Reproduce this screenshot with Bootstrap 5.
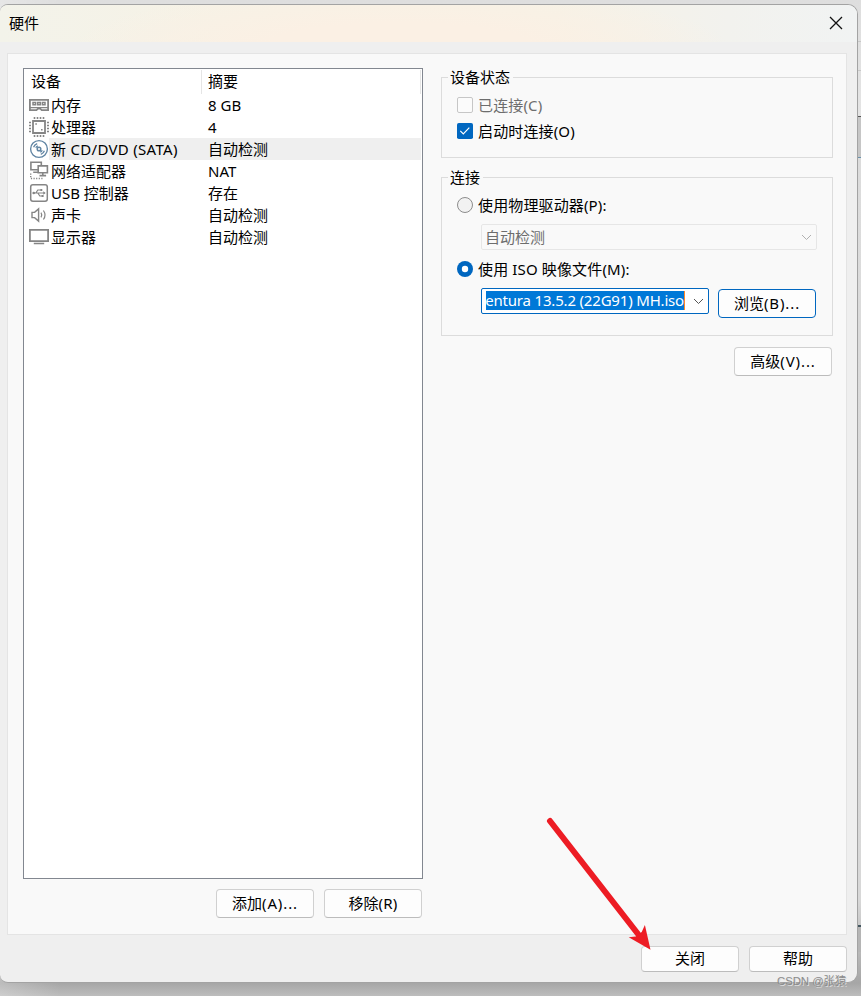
<!DOCTYPE html>
<html lang="zh-CN">
<head>
<meta charset="utf-8">
<title>硬件</title>
<link rel="stylesheet" href="https://cdn.jsdelivr.net/npm/bootstrap@5.3.0/dist/css/bootstrap.min.css">
<style>
body{width:861px;height:996px;overflow:hidden;font:400 15px/22px "Noto Sans","Noto Sans CJK SC",sans-serif;color:#000;background:linear-gradient(90deg,rgba(255,255,255,.25),transparent 60px),linear-gradient(#dedede 0,#e4e4e4 115px,#dcdcdc 160px,#d8d8d8 900px,#a6a6a6 983px,#bdbdbd 996px)}
.backdrop{position:absolute;left:857px;top:0;width:4px;height:996px;z-index:-1}
.win{margin-top:4px;width:858px;height:979px;background:#efefef;border:1px solid #a3a3a3;border-left:0;border-radius:8px 10px 10px 8px;overflow:hidden}
.titlebar{height:37px;padding:0 14px 2px 9px;background:radial-gradient(ellipse 330px 60px at 400px 42px,#fbf0e4 40%,rgba(251,240,228,0)),linear-gradient(90deg,#f3f3ea,#f6f2e6 25%,#f6f2e6 65%,#f2f2ee 85%,#f1f3f3)}
.pane{margin:11px 10px 0 7px;width:840px;height:882px;border:1px solid #e4e4e4;background:#f9f9f9;padding:14px 13px 0 15px}
.devices{width:400px;height:811px;border:1px solid #828790;background:#fff}
.head-row{height:25px;padding:1px 1px 0 0}
.head-row>div{height:24px;border-right:1px solid #e5e5e5}
.c1{width:178px;padding-left:7px}
.c2{padding-left:6px}
.dev{height:22px;padding-left:5px;line-height:22px}
.dev svg{width:20px;height:20px;flex:none;margin-top:1px}
.dev .cell{width:152px;padding-left:2px}
.dev .val{padding-left:7px}
.dev .fill{margin-right:1px}
.dev.sel .fill{background:#efefef}
.ls{letter-spacing:.3px}
.dots{letter-spacing:.9px}
.wbtn{width:98px;height:29px;padding:0 0 1px;font-size:15px;line-height:26px;color:#000;background:#fdfdfd;border:1px solid #d0d0d0;border-bottom-color:#bcbcbc;border-radius:4px;text-align:center}
.wbtn.focus-blue{border-color:#0067c0}
.wbtn.low{height:26px;line-height:23px}
.right-col{width:392px;margin-left:18px;padding-top:9px}
.group{border:1px solid #dcdcdc;padding:0 15px}
.group1{height:81px}
.group2{height:159px;margin-top:19px}
.group h2{font-size:15px;line-height:20px;font-weight:400;margin:-11px 0 10px -9px;padding:0 3px 0 2px;background:#f9f9f9;width:max-content}
.opt{height:16px;gap:5px;line-height:16px;white-space:nowrap;letter-spacing:.14px}
.opt svg{width:16px;height:16px;flex:none}
.muted{color:#6d6d6d}
.combo{height:26px;margin-left:24px;border:1px solid #e6e6e6;border-radius:2px;padding:0 4px 0 3px;white-space:nowrap}
.combo.on{width:228px;border-color:#0067c0;background:#fff;padding-left:4px}
.pick{width:199px;height:19px;margin-top:-1px;line-height:18px;background:#0078d7;color:#fff;display:flex;justify-content:flex-end;border-right:1px solid #ff8728}
.foot{margin:11px 10px 0 0;gap:10px}
.arrow{position:absolute;left:540px;top:812px}
.wm{position:absolute;left:777px;top:972px;font:11.3px/18px "Liberation Sans","Noto Sans CJK SC",sans-serif;color:#8b8b8b;text-shadow:1px 1px 0 #ddd;white-space:nowrap}
</style>
<script src="https://cdn.jsdelivr.net/npm/bootstrap@5.3.0/dist/js/bootstrap.bundle.min.js"></script>
</head>
<body>
<svg class="backdrop" viewBox="0 0 4 996"><path fill="#c8c8c8" d="M0 41h4v1H0zM0 70h4v1H0z"/><path fill="#555" d="M0 116h4v1H0z"/><path fill="#c6c6c6" d="M0 117h4v40H0z"/><path fill="#6a92ab" d="M0 157h4v1H0z"/><path fill="#44565f" d="M0 925h4v2H0z"/><path fill="#b5b5b5" d="M0 927h4v25H0z"/></svg>
<main class="win">
  <header class="titlebar d-flex align-items-center justify-content-between">
    <span>硬件</span>
    <svg width="14" height="14" viewBox="0 0 14 14" stroke="#111" stroke-width="1.3"><path d="M1 1l12 12M13 1L1 13"/></svg>
  </header>
  <section class="pane d-flex align-items-start">
    <div>
      <div class="devices">
        <div class="head-row d-flex"><div class="c1">设备</div><div class="c2 flex-grow-1">摘要</div></div>
        <div class="dev d-flex">
          <svg viewBox="0 0 20 20" fill="none" stroke="#858585" stroke-width="1.8"><path d="M.9 4.9h18.2v10.2h-6.4l-1.5-1.4H9l-1.5 1.4H.9z"/><path stroke-width="1.1" d="M1 12.6h18"/><path stroke-width="1.5" d="M4 7.5h2.6v2.2H4zM8.7 7.5h2.6v2.2H8.7zM13.4 7.5H16v2.2h-2.6z"/></svg>
          <div class="fill d-flex flex-grow-1"><div class="cell">内存</div><div class="val">8 GB</div></div></div>
        <div class="dev d-flex">
          <svg viewBox="0 0 20 20" fill="none" stroke="#858585"><path stroke-width="1.8" d="M4 4h12v12H4z"/><path stroke-width="1.6" d="M5.5 0v2M8.5 0v2M11.5 0v2M14.5 0v2M5.5 18V20M8.5 18V20M11.5 18V20M14.5 18V20M0 5.5h2M0 8.5h2M0 11.5h2M0 14.5h2M18 5.5H20M18 8.5H20M18 11.5H20M18 14.5H20"/><path stroke-width="1.6" d="M6.3 7h1.6M12 12.8h1.6"/></svg>
          <div class="fill d-flex flex-grow-1"><div class="cell">处理器</div><div class="val">4</div></div></div>
        <div class="dev sel d-flex">
          <svg viewBox="0 0 20 20" fill="none" stroke="#6286a4"><circle cx="10" cy="10" r="8.4" stroke-width="1.4" fill="#fff"/><circle cx="10" cy="10" r="1.8" stroke-width="1.5"/><path stroke-width="1.3" d="M4.6 8.2a5.8 5.8 0 0 1 3.6-3.6M6.8 8.8a3.5 3.5 0 0 1 2-2M15.4 11.8a5.8 5.8 0 0 1-3.6 3.6M13.2 11.2a3.5 3.5 0 0 1-2 2"/></svg>
          <div class="fill d-flex flex-grow-1"><div class="cell ls">新 CD/DVD (SATA)</div><div class="val">自动检测</div></div></div>
        <div class="dev d-flex">
          <svg viewBox="0 0 20 20" fill="none" stroke="#858585" stroke-width="1.6"><path d="M8.5 8.8H1.9V1.2h10.4v3M4.2 11.3h4.3M9.2 4.9h9.2v6.8H9.2zM13.8 12v2.3M10.5 14.6h6.6"/><path stroke-width="1.4" stroke-dasharray="1.2 1.4" d="M1.7 12.5v5h11.8"/></svg>
          <div class="fill d-flex flex-grow-1"><div class="cell">网络适配器</div><div class="val">NAT</div></div></div>
        <div class="dev d-flex">
          <svg viewBox="0 0 20 20" fill="none" stroke="#858585" stroke-width="1.2"><rect x="1.7" y="1.7" width="16.6" height="16.6" rx="2.2" stroke-width="1.5"/><path d="M4 10h11.5M6.8 10l2-3h2.8M8.8 10l2 3h2.2"/><path fill="#858585" stroke="none" d="M14.3 8.2l2.4 1.8-2.4 1.8zM11.3 5.9h2v2h-2zM12.6 12h2v2h-2z"/><circle cx="4.7" cy="10" r="1.3" fill="#858585" stroke="none"/></svg>
          <div class="fill d-flex flex-grow-1"><div class="cell">USB 控制器</div><div class="val">存在</div></div></div>
        <div class="dev d-flex">
          <svg viewBox="0 0 20 20" fill="none" stroke="#858585" stroke-width="1.4"><path d="M3 7.4h2.6l4-3.5v12.2l-4-3.5H3z"/><path d="M12 7.7q1.5 2.3 0 4.6M14.4 5.5q3.2 4.5 0 9" stroke-width="1.2"/></svg>
          <div class="fill d-flex flex-grow-1"><div class="cell">声卡</div><div class="val">自动检测</div></div></div>
        <div class="dev d-flex">
          <svg viewBox="0 0 20 20" fill="none" stroke="#858585" stroke-width="1.8"><path d="M.9 2.9h18.2v11.2H.9z"/><path d="M4.8 16.5h10.4" stroke-width="1.4"/></svg>
          <div class="fill d-flex flex-grow-1"><div class="cell">显示器</div><div class="val">自动检测</div></div></div>
      </div>
      <div class="d-flex justify-content-end" style="gap:10px;padding:10px 1px 0 0">
        <button class="wbtn">添加<span class="dots">(A)...</span></button><button class="wbtn">移除<span class="ls">(R)</span></button>
      </div>
    </div>
    <div class="right-col">
      <section class="group group1">
        <h2>设备状态</h2>
        <div class="opt muted d-flex"><svg viewBox="0 0 16 16"><rect x=".5" y=".5" width="15" height="15" rx="1.5" fill="#fbfbfb" stroke="#c6c6c6"/></svg>已连接(C)</div>
        <div class="opt d-flex" style="margin-top:10px"><svg viewBox="0 0 16 16"><rect width="16" height="16" rx="1.8" fill="#0067c0"/><path d="M3.3 7.8l3 3 6-6.1" fill="none" stroke="#fff" stroke-width="1.2"/></svg>启动时连接(O)</div>
      </section>
      <section class="group group2">
        <h2>连接</h2>
        <div class="opt d-flex"><svg viewBox="0 0 16 16"><circle cx="8" cy="8" r="7.5" fill="#f2f2f2" stroke="#8c8c8c"/></svg>使用物理驱动器(P):</div>
        <div class="combo muted d-flex align-items-center justify-content-between" style="margin-top:11px"><span>自动检测</span><svg width="11" height="7" viewBox="0 0 11 7" fill="none" stroke="#b0b0b0"><path d="M1 1l4.5 4.5L10 1"/></svg></div>
        <div class="opt d-flex" style="margin-top:11px"><svg viewBox="0 0 16 16"><circle cx="8" cy="8" r="8" fill="#0067c0"/><circle cx="8" cy="8" r="3.2" fill="#fff"/></svg>使用 ISO 映像文件(M):</div>
        <div class="d-flex align-items-start" style="margin-top:11px">
          <div class="combo on d-flex align-items-center justify-content-between"><div class="pick"><span style="letter-spacing:-.18px">entura 13.5.2 (22G91) MH.iso</span></div><svg width="11" height="7" viewBox="0 0 11 7" fill="none" stroke="#555"><path d="M1 1l4.5 4.5L10 1"/></svg></div>
          <button class="wbtn focus-blue" style="margin:1px 0 0 9px">浏览<span class="dots">(B)...</span></button>
        </div>
      </section>
      <div class="d-flex justify-content-end" style="padding:11px 1px 0 0"><button class="wbtn">高级<span class="dots">(V)...</span></button></div>
    </div>
  </section>
  <footer class="foot d-flex justify-content-end"><button class="wbtn low">关闭</button><button class="wbtn low">帮助</button></footer>
</main>
<svg class="arrow" width="120" height="145" viewBox="540 812 120 145"><path d="M550 821l88 113" stroke="#ed1c24" stroke-width="6" stroke-linecap="round"/><path fill="#ed1c24" d="M650.5 949.8L628.7 937.3l7-.8 6-4.5 3.2-7z"/></svg>
<div class="wm">CSDN @张猿</div>
</body>
</html>
